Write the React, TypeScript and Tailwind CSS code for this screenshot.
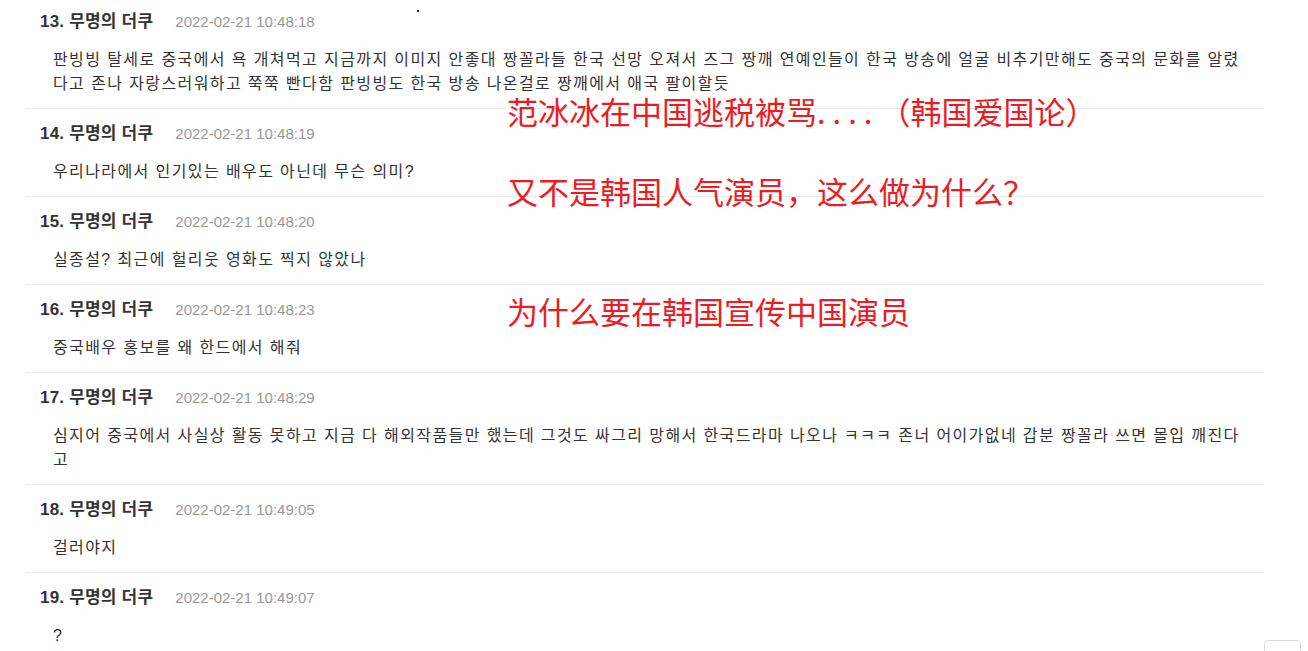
import React from 'react';

type Comment = {
  no: number;
  time: string;
  text: string;
};

const comments: Comment[] = [
  {
    no: 13,
    time: '2022-02-21 10:48:18',
    text: '판빙빙 탈세로 중국에서 욕 개쳐먹고 지금까지 이미지 안좋대 짱꼴라들 한국 선망 오져서 즈그 짱깨 연예인들이 한국 방송에 얼굴 비추기만해도 중국의 문화를 알렸다고 존나 자랑스러워하고 쭉쭉 빤다함 판빙빙도 한국 방송 나온걸로 짱깨에서 애국 팔이할듯',
  },
  { no: 14, time: '2022-02-21 10:48:19', text: '우리나라에서 인기있는 배우도 아닌데 무슨 의미?' },
  { no: 15, time: '2022-02-21 10:48:20', text: '실종설? 최근에 헐리웃 영화도 찍지 않았나' },
  { no: 16, time: '2022-02-21 10:48:23', text: '중국배우 홍보를 왜 한드에서 해줘' },
  {
    no: 17,
    time: '2022-02-21 10:48:29',
    text: '심지어 중국에서 사실상 활동 못하고 지금 다 해외작품들만 했는데 그것도 싸그리 망해서 한국드라마 나오나 ㅋㅋㅋ 존너 어이가없네 갑분 짱꼴라 쓰면 몰입 깨진다고',
  },
  { no: 18, time: '2022-02-21 10:49:05', text: '걸러야지' },
  { no: 19, time: '2022-02-21 10:49:07', text: '?' },
];

const sans = 'font-["Liberation_Sans","Noto_Sans_CJK_KR",sans-serif]';
const note = 'text-[31px] leading-[32px] text-[#ed1c24] font-["Noto_Sans_CJK_SC",sans-serif] whitespace-nowrap';

const CommentRow: React.FC<{ c: Comment }> = ({ c }) => (
  <div className="border-b border-[#ebebeb] px-[13px] pt-[15px] pb-[12px]">
    <div className="flex items-center h-5 gap-[22px]">
      <span className="text-[17px] font-bold text-[#333] leading-5 tracking-[0.2px]">
        {c.no}. 무명의 더쿠
      </span>
      <span className="text-[15px] text-[#999] leading-5">{c.time}</span>
    </div>
    <p className="mt-4 pl-[13px] text-[16px] leading-6 text-[#333] tracking-[1.4px]">
      {c.text}
    </p>
  </div>
);

const App: React.FC = () => {
  return (
    <div className={`relative min-h-[651px] bg-white overflow-hidden ${sans}`}>
      <div className="-mt-[3px] ml-[27px] w-[1237px] flex flex-col">
        {comments.map(c => (
          <CommentRow key={c.no} c={c} />
        ))}
      </div>

      {/* stray pixel at the top */}
      <span className="absolute left-[417px] top-[10px] w-[2px] h-[2px] bg-[#222]" />

      {/* red annotations drawn over the page */}
      <div className="absolute left-[507px] top-[95px] flex flex-col">
        <div className={note}>
          范冰冰在中国逃税被骂<span className="tracking-[7px]">....</span>（韩国爱国论）
        </div>
        <div className={`${note} mt-[48px]`}>又不是韩国人气演员，这么做为什么？</div>
        <div className={`${note} mt-[88px]`}>为什么要在韩国宣传中国演员</div>
      </div>

      {/* back-to-top button peeking in at the bottom right */}
      <button className="absolute left-[1264px] top-[640px] w-[37px] h-[40px] rounded-[4px] border border-[#dcdcdc] bg-white" />
    </div>
  );
};

export default App;
